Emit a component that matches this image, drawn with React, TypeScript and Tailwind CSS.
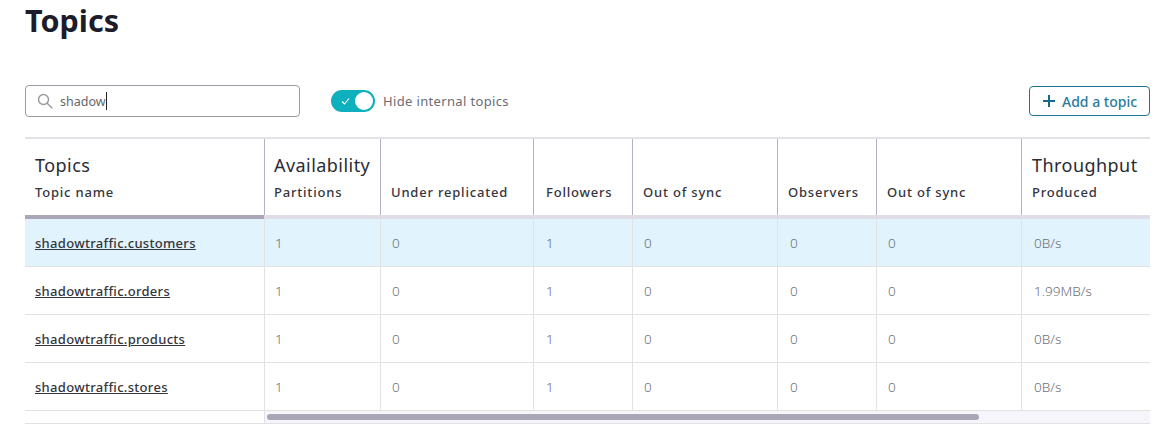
const font = "font-['Noto_Sans',sans-serif]";
const cols = ["w-[240px]", "w-[116px]", "w-[153px]", "w-[99px]", "w-[145px]", "w-[99px]", "w-[145px]", "w-[129px]"];

const headers = [
  { group: "Topics", label: "Topic name", pad: "pl-[10px]" },
  { group: "Availability", label: "Partitions", pad: "pl-[9px]" },
  { label: "Under replicated", pad: "pl-[10px]" },
  { label: "Followers", pad: "pl-[12px]" },
  { label: "Out of sync", pad: "pl-[10px]" },
  { label: "Observers", pad: "pl-[10px]" },
  { label: "Out of sync", pad: "pl-[10px]" },
  { group: "Throughput", label: "Produced", pad: "pl-[10px]" },
];

const dataPads = ["pl-[10px]", "pl-[11px]", "pl-[12px]", "pl-[11px]", "pl-[12px]", "pl-[11px]"];

const rows = [
  ["shadowtraffic.customers", "0B/s"],
  ["shadowtraffic.orders", "1.99MB/s"],
  ["shadowtraffic.products", "0B/s"],
  ["shadowtraffic.stores", "0B/s"],
];

export default function App() {
  return (
    <div className={`${font} w-[1172px] h-[447px] bg-white overflow-hidden pl-[25px] pr-[22px]`}>
      <h1 className="text-[30.5px] leading-[40px] font-bold text-[#1c1c2b] h-[85px]">Topics</h1>
      <div className="flex items-center h-[32px]">
        <div className="w-[275px] h-[32px] rounded-[4px] border border-[#9a9aa2] flex items-center pl-[10px]">
          <svg width="18" height="18" viewBox="0 0 18 18" fill="none" stroke="#9a9a9a" strokeWidth="1.4" strokeLinecap="round">
            <circle cx="7.5" cy="7.5" r="5" />
            <path d="M11.2 11.2 16 16" />
          </svg>
          <span className="ml-[6px] mt-[2px] text-[12.5px] text-[#66666e]">shadow</span>
          <span className="w-px h-[18px] bg-[#222]" />
        </div>
        <div className="ml-[31px] w-[44px] h-[22px] rounded-full bg-[#0fb0bd] relative flex items-center">
          <svg className="absolute left-[9px] top-[6px]" width="11" height="11" viewBox="0 0 11 11" fill="none" stroke="#fff" strokeWidth="1.1">
            <path d="M2 5.5 4.5 8 9 2.5" />
          </svg>
          <span className="absolute right-[2px] top-[2px] w-[18px] h-[18px] rounded-full bg-white" />
        </div>
        <span className="ml-[8px] mt-[1px] text-[13px] tracking-[0.35px] text-[#6c6c74]">Hide internal topics</span>
        <button className="ml-auto w-[121px] h-[30px] rounded-[4px] border border-[#1f7396] flex items-center justify-start pl-[12px] gap-[6px] text-[14px] font-medium text-[#2a7a9c]">
          <svg width="14" height="14" viewBox="0 0 14 14" stroke="#14688c" strokeWidth="2">
            <path d="M7 1v12M1 7h12" />
          </svg>
          Add a topic
        </button>
      </div>
      <div className="mt-[20px] w-[1125px] border-t-2 border-[#e2e2e6]">
        <div className="flex h-[76px]">
          {headers.map((h, i) => (
            <div
              key={i}
              className={`${cols[i]} ${h.pad} shrink-0 flex flex-col justify-end pb-[14px] ${i < 7 ? "border-r border-[#b5b3c2]" : ""}`}
            >
              {h.group && <div className="text-[18px] leading-[24px] tracking-[0.45px] text-[#2b2b33] mb-[6px]">{h.group}</div>}
              <div className="text-[13px] leading-[18px] font-medium tracking-[0.8px] text-[#35353d] whitespace-nowrap">{h.label}</div>
            </div>
          ))}
        </div>
        <div className="flex h-[4px] bg-[#dfdde6]">
          <div className="w-[239px] bg-[#a8a6b7]" />
        </div>
        {rows.map((r, idx) => (
          <div key={r[0]} className={`flex h-[48px] border-b border-[#e2e2e6] ${idx === 0 ? "bg-[#e1f3fc]" : "bg-white"}`}>
            <div className={`${cols[0]} shrink-0 border-r border-[#e2e2e6] pl-[10px] flex items-center pt-[2px]`}>
              <a className="text-[13px] font-medium tracking-[0.3px] underline text-[#35353d]">{r[0]}</a>
            </div>
            {["1", "0", "1", "0", "0", "0"].map((v, i) => (
              <div key={i} className={`${cols[i + 1]} ${dataPads[i]} shrink-0 border-r border-[#e2e2e6] flex items-center pt-[2px] text-[13.5px] text-[#6e6e76] font-light`}>
                {v}
              </div>
            ))}
            <div className={`${cols[7]} shrink-0 pl-[12px] flex items-center pt-[2px] text-[13.5px] text-[#6e6e76] font-light`}>{r[1]}</div>
          </div>
        ))}
        <div className="flex h-[13px] border-b border-[#e2e2e6]">
          <div className="w-[240px] shrink-0 border-r border-[#e2e2e6]" />
          <div className="flex-1 bg-[#f6f6fa] pl-[2px] pt-[3px]">
            <div className="w-[712px] h-[6px] rounded-full bg-[#a8a6b7]" />
          </div>
        </div>
      </div>
    </div>
  );
}
